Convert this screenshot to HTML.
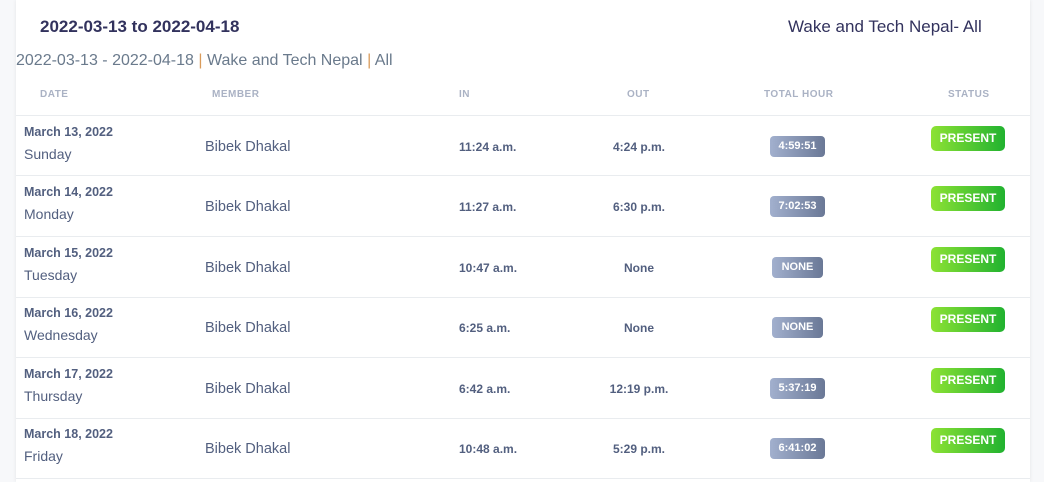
<!DOCTYPE html>
<html><head><style>
body{margin:0;width:1044px;height:482px;background:#f7f8fa;font-family:"Liberation Sans",sans-serif;overflow:hidden;position:relative}
.card{position:absolute;left:16px;top:0;width:1014px;height:482px;background:#fff;box-shadow:0 0 4px rgba(0,0,0,.08)}
.t1{position:absolute;left:24px;top:17px;font-size:17px;color:#32325d;font-weight:bold}
.t2{position:absolute;left:772px;top:17px;font-size:17px;color:#32325d}
.t3{position:absolute;left:0;top:52px;font-size:16px;color:#6a7a8c}
.t3 span{color:#d99b5b}
.h{position:absolute;top:89px;font-size:10px;font-weight:bold;color:#aab2c4;letter-spacing:.5px}
.line{position:absolute;left:0;width:1014px;height:1px;background:#e9ecef}
.row{position:absolute;left:0;width:1014px;height:60px;color:#525f7f}
.d1{position:absolute;left:8px;top:9px;font-size:12.5px;font-weight:bold}
.d2{position:absolute;left:8px;top:30px;font-size:14px}
.m{position:absolute;left:189px;top:23px;font-size:14.5px}
.in{position:absolute;left:443px;top:24px;font-size:12px;font-weight:bold}
.out{position:absolute;left:573px;width:100px;text-align:center;top:24px;font-size:12px;font-weight:bold}
.tot{position:absolute;left:754px;top:20px;width:55px;height:21px;border-radius:4px;background:linear-gradient(90deg,#a2b0ce,#6a7896);color:#fff;font-size:11px;font-weight:bold;text-align:center;line-height:21px}
.tot.n{left:756px;width:51px}
.st{position:absolute;left:915px;top:10px;width:74px;height:25px;border-radius:5px;background:linear-gradient(90deg,#8de234,#21b230);color:#fff;font-size:12px;font-weight:bold;text-align:center;line-height:25px}
</style></head><body>
<div class="card">
<div class="t1">2022-03-13 to 2022-04-18</div>
<div class="t2">Wake and Tech Nepal- All</div>
<div class="t3">2022-03-13 - 2022-04-18 <span>|</span> Wake and Tech Nepal <span>|</span> All</div>
<div class="h" style="left:24px">DATE</div>
<div class="h" style="left:196px">MEMBER</div>
<div class="h" style="left:443px">IN</div>
<div class="h" style="left:611px">OUT</div>
<div class="h" style="left:748px">TOTAL HOUR</div>
<div class="h" style="left:932px">STATUS</div>
<div class="line" style="top:115px"></div>
<div class="row" style="top:116px"><div class="d1">March 13, 2022</div><div class="d2">Sunday</div><div class="m">Bibek Dhakal</div><div class="in">11:24 a.m.</div><div class="out">4:24 p.m.</div><div class="tot">4:59:51</div><div class="st">PRESENT</div></div>
<div class="line" style="top:175px"></div>
<div class="row" style="top:176px"><div class="d1">March 14, 2022</div><div class="d2">Monday</div><div class="m">Bibek Dhakal</div><div class="in">11:27 a.m.</div><div class="out">6:30 p.m.</div><div class="tot">7:02:53</div><div class="st">PRESENT</div></div>
<div class="line" style="top:236px"></div>
<div class="row" style="top:237px"><div class="d1">March 15, 2022</div><div class="d2">Tuesday</div><div class="m">Bibek Dhakal</div><div class="in">10:47 a.m.</div><div class="out">None</div><div class="tot n">NONE</div><div class="st">PRESENT</div></div>
<div class="line" style="top:297px"></div>
<div class="row" style="top:297px"><div class="d1">March 16, 2022</div><div class="d2">Wednesday</div><div class="m">Bibek Dhakal</div><div class="in">6:25 a.m.</div><div class="out">None</div><div class="tot n">NONE</div><div class="st">PRESENT</div></div>
<div class="line" style="top:357px"></div>
<div class="row" style="top:358px"><div class="d1">March 17, 2022</div><div class="d2">Thursday</div><div class="m">Bibek Dhakal</div><div class="in">6:42 a.m.</div><div class="out">12:19 p.m.</div><div class="tot">5:37:19</div><div class="st">PRESENT</div></div>
<div class="line" style="top:418px"></div>
<div class="row" style="top:418px"><div class="d1">March 18, 2022</div><div class="d2">Friday</div><div class="m">Bibek Dhakal</div><div class="in">10:48 a.m.</div><div class="out">5:29 p.m.</div><div class="tot">6:41:02</div><div class="st">PRESENT</div></div>
<div class="line" style="top:478px"></div>
</div>
</body></html>
